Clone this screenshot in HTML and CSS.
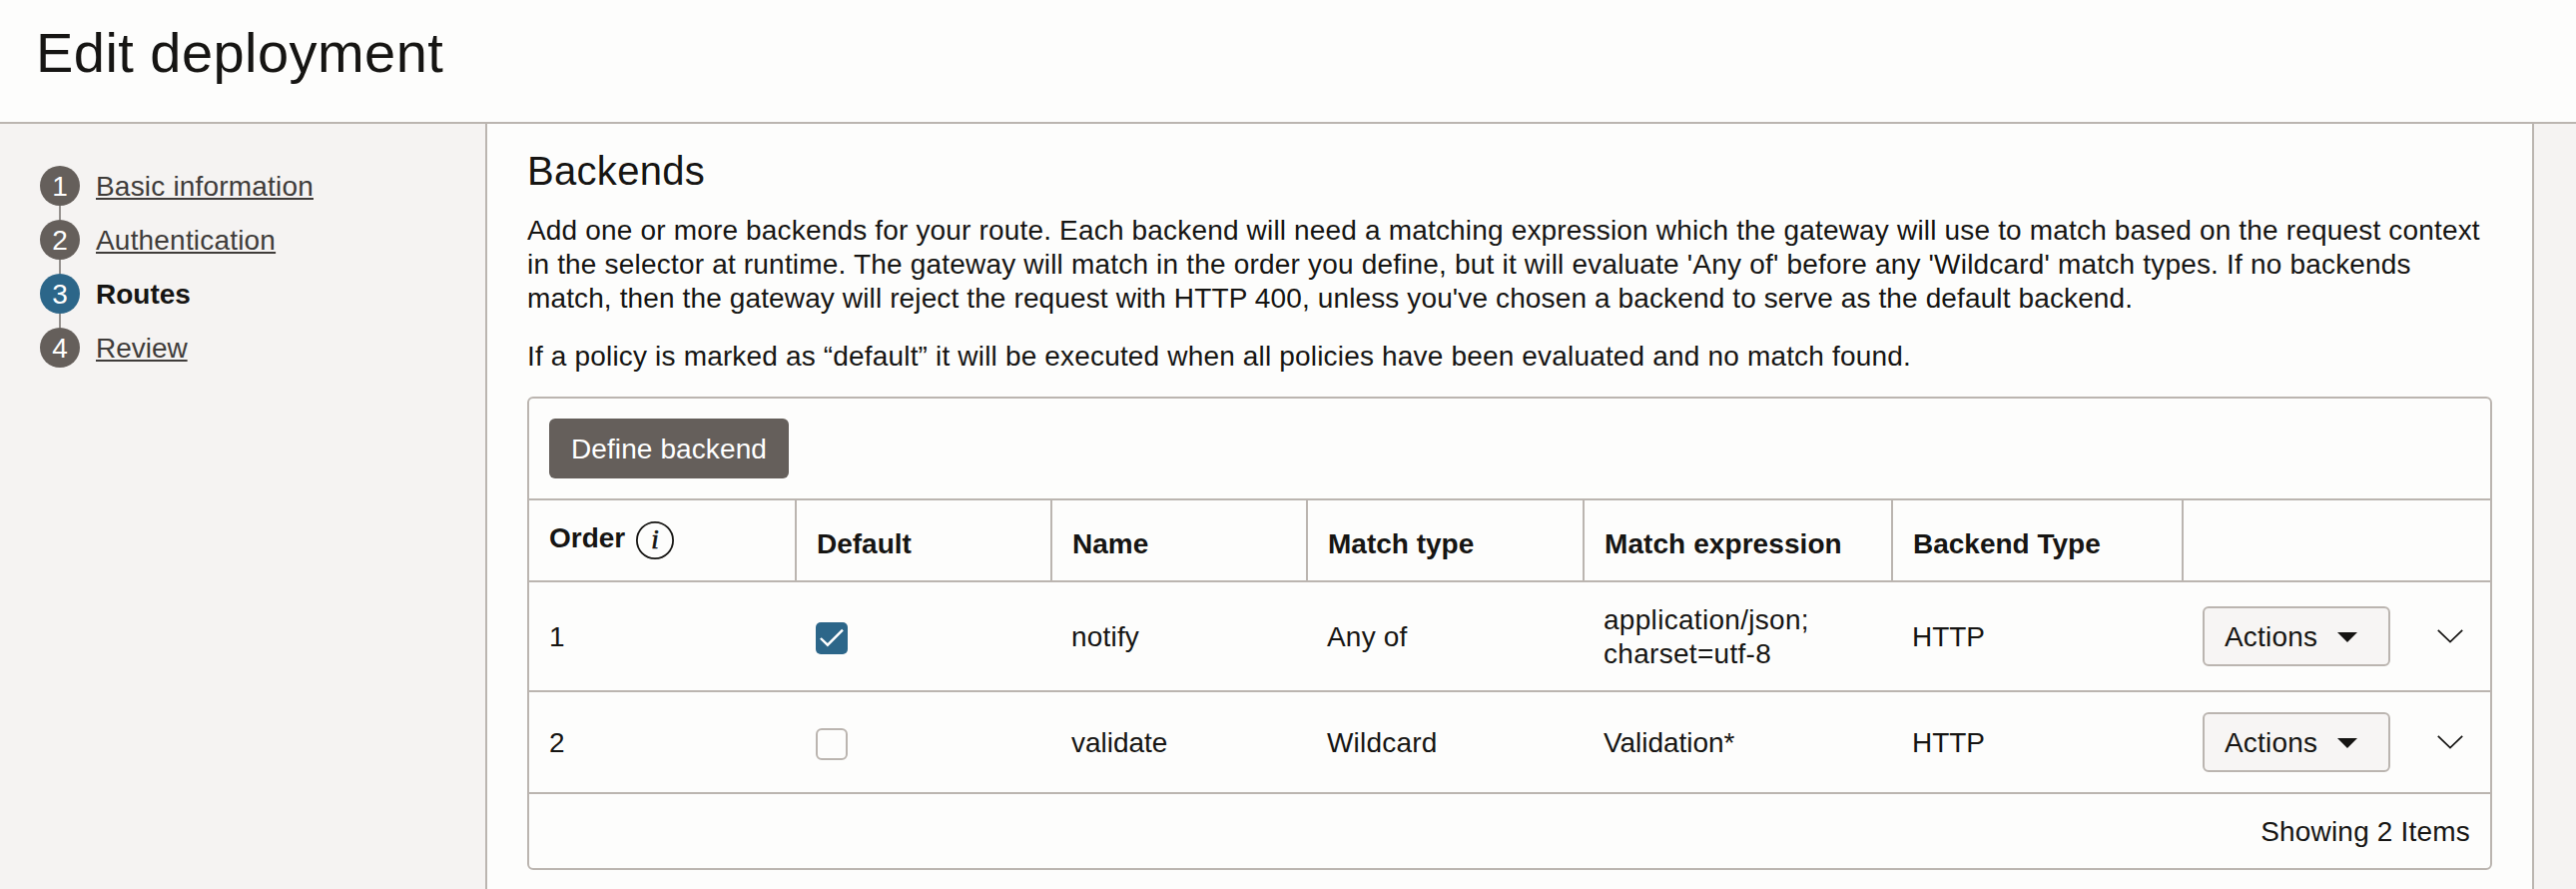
FILE: index.html
```html
<!DOCTYPE html>
<html lang="en">
<head>
<meta charset="utf-8">
<title>Edit deployment</title>
<link rel="stylesheet" href="styles.css">
</head>
<body>
<header class="page-header"><h1 class="page-title">Edit deployment</h1></header>
<div class="layout">
  <nav class="sidebar">
    <ol class="steps">
      <li class="step"><span class="step-num">1</span><a class="step-link">Basic information</a></li>
      <li class="step"><span class="step-num">2</span><a class="step-link">Authentication</a></li>
      <li class="step step-active"><span class="step-num">3</span><span class="step-current">Routes</span></li>
      <li class="step"><span class="step-num">4</span><a class="step-link tight">Review</a></li>
    </ol>
  </nav>
  <main class="content">
    <h2 class="section-title">Backends</h2>
    <p class="intro"><span class="line line-1">Add one or more backends for your route. Each backend will need a matching expression which the gateway will use to match based on the request context</span> <span class="line line-2">in the selector at runtime. The gateway will match in the order you define, but it will evaluate 'Any of' before any 'Wildcard' match types. If no backends</span> <span class="line line-3">match, then the gateway will reject the request with HTTP 400, unless you've chosen a backend to serve as the default backend.</span></p>
    <p class="note"><span class="line line-1">If a policy is marked as “default” it will be executed when all policies have been evaluated and no match found.</span></p>
    <section class="panel">
      <div class="toolbar"><button class="btn-primary" type="button">Define backend</button></div>
      <div class="row head">
        <div class="cell order"><span class="order-label">Order</span>
          <svg class="info" viewBox="0 0 40 40"><circle cx="20" cy="20" r="18.1" fill="none" stroke="#161513" stroke-width="1.8"/><text x="20" y="28.3" text-anchor="middle" class="info-i">i</text></svg>
        </div>
        <div class="cell">Default</div><div class="cell">Name</div><div class="cell">Match type</div><div class="cell wide">Match expression</div><div class="cell">Backend Type</div><div class="cell"></div>
      </div>
      <div class="row row-1">
        <div class="cell first">1</div>
        <div class="cell box"><svg class="check" viewBox="0 0 32 32"><rect width="32" height="32" rx="5" fill="#2c6689"/><path d="M4.9 16L11.9 22.7L27 7.7" fill="none" stroke="#fff" stroke-width="2.4"/></svg></div>
        <div class="cell">notify</div><div class="cell">Any of</div><div class="cell expr">application/json;<br>charset=utf-8</div><div class="cell tight">HTTP</div>
        <div class="cell actions"><button class="btn" type="button">Actions<svg class="caret" viewBox="0 0 20 10"><path d="M0 0H20L10 10Z" fill="#161513"/></svg></button><svg class="chevron" viewBox="0 0 26 14"><path d="M.8 .8L13 12.6L25.2 .8" fill="none" stroke="#161513" stroke-width="1.7"/></svg></div>
      </div>
      <div class="row row-2">
        <div class="cell first">2</div>
        <div class="cell box"><svg class="check" viewBox="0 0 32 32"><rect x="1" y="1" width="30" height="30" rx="5" fill="#fdfdfc" stroke="#bbb5b0" stroke-width="2"/></svg></div>
        <div class="cell tight">validate</div><div class="cell">Wildcard</div><div class="cell tight">Validation*</div><div class="cell tight">HTTP</div>
        <div class="cell actions"><button class="btn" type="button">Actions<svg class="caret" viewBox="0 0 20 10"><path d="M0 0H20L10 10Z" fill="#161513"/></svg></button><svg class="chevron" viewBox="0 0 26 14"><path d="M.8 .8L13 12.6L25.2 .8" fill="none" stroke="#161513" stroke-width="1.7"/></svg></div>
      </div>
      <div class="footer"><span>Showing 2 Items</span></div>
    </section>
  </main>
  <aside class="gutter"></aside>
</div>
</body>
</html>
```
FILE: styles.css
```css
* { box-sizing: border-box; }
body { margin: 0; width: 2580px; height: 890px; overflow: hidden; background: #fdfdfc; color: #161513; font: 28px/34px "Liberation Sans", Arial, sans-serif; letter-spacing: .19px; display: flex; flex-direction: column; }
.page-header { height: 124px; flex: none; border-bottom: 2px solid #bbb5b0; padding: 21px 0 0 36px; }
.page-title { margin: 0; font-size: 56px; line-height: 64px; font-weight: 400; letter-spacing: .45px; }
.layout { flex: 1; display: grid; grid-template-columns: 488px 1fr 44px; }
.sidebar { background: #f5f3f2; border-right: 2px solid #bbb5b0; padding: 42px 0 0 40px; }
.steps { list-style: none; margin: 0; padding: 0; display: flex; flex-direction: column; gap: 14px; }
.step { display: flex; align-items: center; gap: 16px; height: 40px; position: relative; }
.step:not(:last-child)::after { content: ""; position: absolute; left: 19px; top: 40px; width: 2px; height: 14px; background: #95918e; }
.step-num { width: 40px; height: 40px; border-radius: 50%; background: #655f5b; color: #fff; text-align: center; line-height: 42px; letter-spacing: 0; }
.step-active .step-num { background: #2c6689; }
.step-link { color: #3f3c3a; padding-top: 2px; text-decoration: underline; text-decoration-thickness: 2px; text-underline-offset: 2px; }
.step-current { font-weight: 700; padding-top: 2px; letter-spacing: 0; }
.content { padding: 27px 40px 0 40px; }
.section-title { margin: 0; font-size: 40px; line-height: 40px; font-weight: 400; letter-spacing: .3px; }
.intro { margin: 23px 0 0; }
.note { margin: 24px 0 0; }
.line { display: block; white-space: nowrap; width: max-content; }
.line-1 { letter-spacing: .172px; }
.line-2 { letter-spacing: .19px; }
.line-3 { letter-spacing: .125px; }
.tight { letter-spacing: -.03px; }
.panel { border: 2px solid #bbb5b0; border-radius: 6px; width: 1968px; margin-top: 23px; height: 474px; }
.toolbar { height: 102px; border-bottom: 2px solid #bbb5b0; padding: 20px; }
button { font: inherit; color: inherit; letter-spacing: inherit; padding: 0; }
.btn-primary { display: block; width: 240px; height: 60px; border: 0; border-radius: 6px; background: #655f5b; color: #fff; padding-top: 2px; letter-spacing: .1px; }
.row { display: grid; grid-template-columns: 268px 256px 256px 277px 309px 291px 1fr; border-bottom: 2px solid #bbb5b0; }
.cell { padding: 2px 0 0 19px; display: flex; align-items: center; }
.first { padding-left: 20px; }
.head { height: 82px; font-weight: 700; letter-spacing: 0; }
.head .cell { padding: 8px 0 0 20px; border-right: 2px solid #bbb5b0; }
.head .cell:last-child { border-right: 0; }
.head .wide { letter-spacing: .08px; }
.head .order { padding-top: 0; gap: 10px; }
.order-label { padding-bottom: 4px; }
.info { width: 40px; height: 40px; }
.info-i { font: italic 400 27px "Liberation Serif", serif; fill: #161513; stroke: #161513; stroke-width: .7px; letter-spacing: 0; }
.row-1 { height: 110px; }
.row-2 { height: 102px; }
.box { padding-top: 4px; }
.expr { letter-spacing: .3px; }
.check { width: 32px; height: 32px; }
.actions { gap: 47px; padding-top: 0; }
.btn { width: 188px; height: 60px; border: 2px solid #bbb5b0; border-radius: 6px; background: #f7f5f4; display: flex; align-items: center; padding: 2px 0 0 20px; gap: 20px; }
.caret { width: 20px; height: 10px; }
.chevron { width: 26px; height: 14px; }
.footer { height: 74px; display: flex; align-items: center; justify-content: flex-end; padding: 2px 20px 0 0; }
.gutter { background: #f5f3f2; border-left: 2px solid #bbb5b0; }
```
